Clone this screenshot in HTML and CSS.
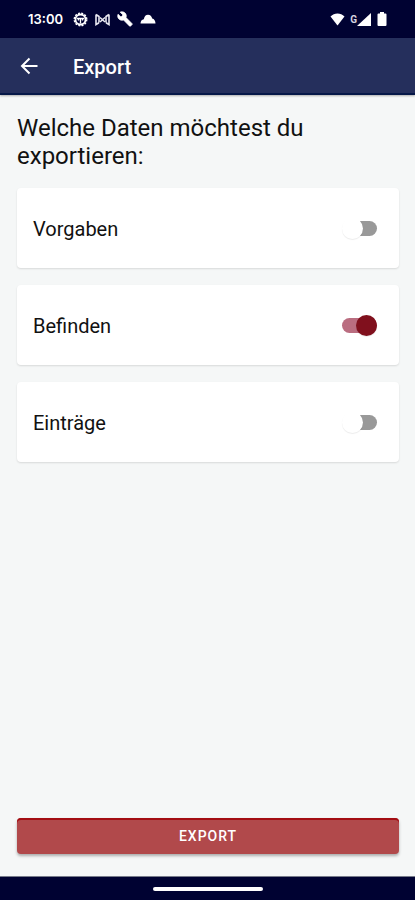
FILE: index.html
```html
<!DOCTYPE html>
<html lang="de">
<head>
  <meta charset="UTF-8">
  <meta name="viewport" content="width=device-width, initial-scale=1">
  <title>Export</title>
  <link rel="stylesheet" href="styles.css">
</head>
<body>

  <!-- Status bar -->
  <div class="status-bar">
    <span class="clock">13:00</span>
    <div class="status-icons">
      <svg width="15" height="15" viewBox="0 0 15 15" fill="none" stroke="#fff">
        <circle cx="7.5" cy="7.5" r="5" stroke-width="1.8"/>
        <circle cx="7.5" cy="7.5" r="6.3" stroke-width="1.3" stroke-dasharray="2 1.3"/>
        <path d="M4 6.500h7M7.500 6v5.500M5.500 6.500v2M9.500 6.500v2" stroke-width="1.300"/>
      </svg>
      <svg width="15" height="13" viewBox="0 0 15 13" fill="none" stroke="#e8e8f0" stroke-width="1.6">
        <path d="M1 1.500v10l3-1.800M14 1.500v10l-3-1.800M1 1.500l3 2v6M14 1.500l-3 2v6"/>
        <path d="M5 4.500l5 4.500M10 4.500L5 9"/>
      </svg>
      <svg width="16" height="16" viewBox="0 0 24 24" fill="#fff" stroke="#fff">
        <path d="M22.700 19l-9.100-9.100c.9-2.300.4-5-1.500-6.900-2-2-5-2.400-7.400-1.300L9 6 6 9 1.600 4.700C.4 7.100.9 10.100 2.900 12.100c1.900 1.900 4.600 2.400 6.900 1.500l9.100 9.100c.4.4 1 .4 1.400 0l2.300-2.300c.5-.4.5-1.100.1-1.400z"/>
      </svg>
      <svg width="16" height="10" viewBox="0 0 16 10" fill="#fff">
        <path d="M.5 9.500C.5 7 1.800 5.600 3.800 5.200 4.500 2.300 5.800.8 8 .8c2.300 0 3.700 1.600 4.200 3.700 2 .5 3.300 2.300 3.300 5z"/>
      </svg>
    </div>
    <div class="signal-icons">
      <svg width="15" height="13" viewBox="0 0 15 13" fill="#fff">
        <path d="M7.500 12.500L.5 3.500C2.500 1.500 4.900.5 7.500.5s5 1 7 3z"/>
      </svg>
      <span class="network">G</span>
      <svg width="14" height="13" viewBox="0 0 14 13" fill="#fff">
        <path d="M0 13L14 0v13z"/>
      </svg>
      <svg class="battery" width="10" height="14" viewBox="0 0 10 14" fill="#fff">
        <path d="M3 0h4v1.500h1.500q1 0 1 1V13q0 1-1 1h-7q-1 0-1-1V2.500q0-1 1-1H3z"/>
      </svg>
    </div>
  </div>

  <!-- App bar -->
  <header class="app-bar">
    <button class="back" type="button" aria-label="Zurück">
      <svg width="24" height="24" viewBox="0 0 24 24" fill="none" stroke="#fff" stroke-width="2">
        <path d="M20.500 12H5M12.500 4.500L5 12l7.500 7.500"/>
      </svg>
    </button>
    <h1>Export</h1>
  </header>

  <main>
    <h2>Welche Daten möchtest du exportieren:</h2>

    <div class="options">
      <label class="card">
        <span>Vorgaben</span>
        <input class="switch" type="checkbox" role="switch">
      </label>
      <label class="card">
        <span>Befinden</span>
        <input class="switch" type="checkbox" role="switch" checked>
      </label>
      <label class="card">
        <span>Einträge</span>
        <input class="switch" type="checkbox" role="switch">
      </label>
    </div>

    <button class="export" type="button">Export</button>
  </main>

  <!-- Gesture bar -->
  <div class="nav-bar">
    <div class="handle"></div>
  </div>

</body>
</html>
```

FILE: styles.css
```css
* {
  box-sizing: border-box;
}

body {
  margin: 0;
  min-height: 100vh;
  display: flex;
  flex-direction: column;
  font-family: Roboto, sans-serif;
  background: #f5f7f7;
  color: #111;
}

svg {
  display: block;
}

.status-bar {
  display: flex;
  align-items: center;
  height: 38px;
  padding: 0 28px;
  background: #000232;
  color: #fff;
}

.clock {
  font-family: Inter, Roboto, sans-serif;
  font-size: 13px;
  font-weight: 600;
}

.status-icons {
  display: flex;
  align-items: center;
  gap: 7px;
  margin-left: 10px;
}

.signal-icons {
  display: flex;
  align-items: center;
  margin-left: auto;
}

.network {
  margin-left: 5px;
  font-size: 10px;
  font-weight: 700;
  color: #d5d5e0;
}

.battery {
  margin-left: 6px;
}

.app-bar {
  display: flex;
  align-items: center;
  gap: 32px;
  height: 57px;
  padding: 0 17px;
  background: #252f5c;
  border-bottom: 2px solid #061848;
  box-shadow: 0 1px 2px rgba(0, 0, 0, 0.3);
  color: #fff;
}

.back {
  padding: 0;
  border: none;
  background: none;
  cursor: pointer;
}

h1 {
  margin: 0;
  padding-top: 2px;
  font-size: 20px;
  font-weight: 500;
}

main {
  flex: 1;
  display: flex;
  flex-direction: column;
  padding: 19px 16px 22px 17px;
}

h2 {
  margin: 0 0 18px;
  font-size: 24px;
  line-height: 28px;
  font-weight: 400;
}

.options {
  display: flex;
  flex-direction: column;
  gap: 17px;
}

.card {
  display: flex;
  align-items: center;
  justify-content: space-between;
  height: 80px;
  padding: 0 22px 0 16px;
  border-radius: 4px;
  background: #fff;
  box-shadow: 0 1px 2px rgba(0, 0, 0, 0.12);
  font-size: 20px;
  cursor: pointer;
}

.card span {
  padding-top: 2px;
}

.switch {
  appearance: none;
  display: flex;
  align-items: center;
  width: 35px;
  height: 15px;
  margin: 0;
  border-radius: 8px;
  background: linear-gradient(to right, transparent 12px, #999 12px);
  cursor: pointer;
}

.switch::before {
  content: "";
  width: 21px;
  height: 21px;
  flex-shrink: 0;
  border-radius: 50%;
  background: #fff;
  box-shadow: 0 1px 1px rgba(0, 0, 0, 0.08);
}

.switch:checked {
  justify-content: flex-end;
  background: #ba6d80;
}

.switch:checked::before {
  background: #80101d;
}

.export {
  height: 36px;
  margin-top: auto;
  border: none;
  border-radius: 4px;
  background: #b1494b;
  box-shadow: inset 0 2px #a30d12, 0 2px 3px rgba(0, 0, 0, 0.3);
  color: #fff;
  font-family: inherit;
  font-size: 14px;
  font-weight: 500;
  letter-spacing: 1px;
  text-transform: uppercase;
  cursor: pointer;
}

.nav-bar {
  display: flex;
  align-items: center;
  justify-content: center;
  height: 24px;
  border-top: 1px solid #777b8a;
  background: #000232;
}

.handle {
  width: 110px;
  height: 4px;
  border-radius: 2px;
  background: #fff;
}
```
